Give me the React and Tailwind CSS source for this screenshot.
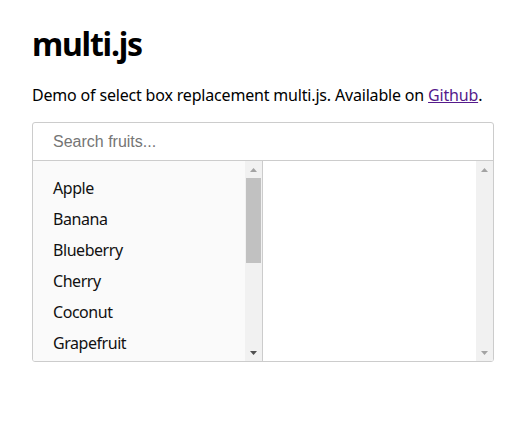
import React from "react";

const fruits = ["Apple", "Banana", "Blueberry", "Cherry", "Coconut", "Grapefruit"];

function Arrow({ up, color }) {
  return (
    <svg width="7" height="4" viewBox="0 0 7 4" className="block">
      {up ? <polygon points="0,4 7,4 3.5,0" fill={color} /> : <polygon points="0,0 7,0 3.5,4" fill={color} />}
    </svg>
  );
}

function Scrollbar({ thumb, downColor }) {
  return (
    <div className="absolute right-0 top-0 bottom-0 w-[17px] bg-[#f1f1f1] flex flex-col items-center">
      <div className="h-[17px] flex items-center justify-center">
        <Arrow up color="#a3a3a3" />
      </div>
      <div className="flex-1 w-full px-[1px]">
        {thumb && <div className="h-[85px] bg-[#c1c1c1]" />}
      </div>
      <div className="h-[17px] flex items-center justify-center">
        <Arrow color={downColor} />
      </div>
    </div>
  );
}

export default function App() {
  return (
    <div className="min-h-[445px] bg-white px-[32px] pt-[22px] text-[#111]" style={{ fontFamily: '"Noto Sans", "Open Sans", sans-serif' }}>
      <h1 className="text-[32px] font-bold leading-[44px] text-black tracking-[-1.2px]">multi.js</h1>
      <p className="mt-[18px] text-[16px] leading-[22px] text-black whitespace-nowrap tracking-[-0.18px]">
        Demo of select box replacement multi.js. Available on{" "}
        <a href="#" className="underline text-[#551a8b]">Github</a>.
      </p>
      <div className="mt-[16px] w-[462px] border border-[#cccccc] rounded-[3px] overflow-hidden">
        <div className="h-[38px] flex items-center px-[20px] border-b border-[#cccccc]">
          <span className="text-[16px] text-[#757575]" style={{ fontFamily: '"Liberation Sans", Arial, sans-serif' }}>
            Search fruits...
          </span>
        </div>
        <div className="flex h-[200px]">
          <div className="relative w-[230px] bg-[#fafafa] border-r border-[#cccccc] overflow-hidden">
            <div className="pt-[11px] tracking-[-0.45px]">
              {fruits.map((f) => (
                <div key={f} className="h-[31px] flex items-center px-[20px] text-[16px] text-[#111]">
                  {f}
                </div>
              ))}
            </div>
            <Scrollbar thumb downColor="#505050" />
          </div>
          <div className="relative flex-1 bg-white">
            <Scrollbar downColor="#a3a3a3" />
          </div>
        </div>
      </div>
    </div>
  );
}
